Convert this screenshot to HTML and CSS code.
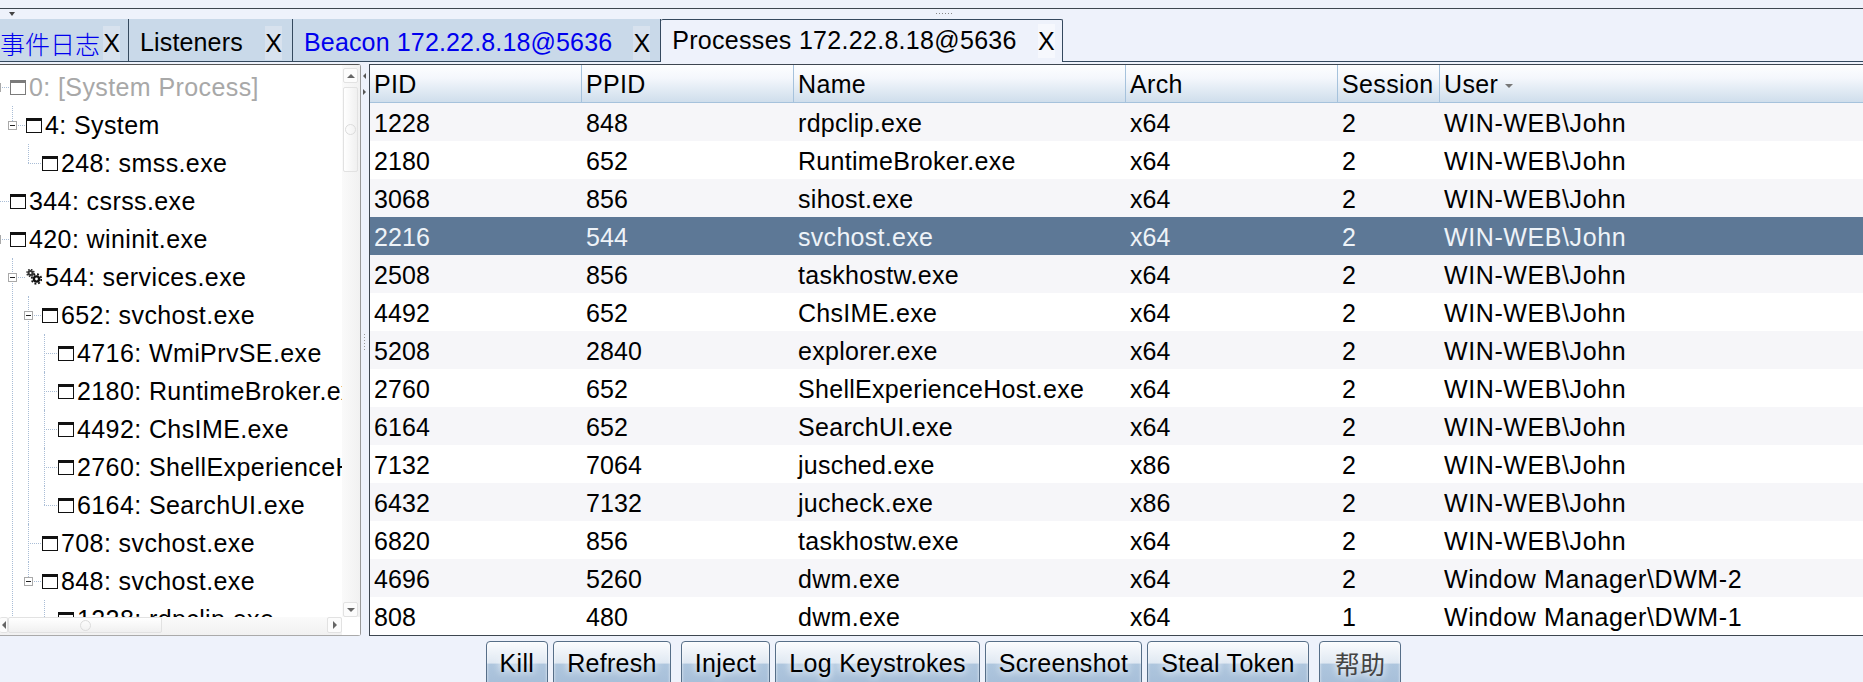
FILE: index.html
```html
<!DOCTYPE html>
<html lang="en">
<head>
  <meta charset="UTF-8">
  <meta name="viewport" content="width=device-width, initial-scale=1">
  <title>Processes 172.22.8.18@5636</title>
  <link rel="stylesheet" href="styles.css">
</head>
<body>

<div class="top-split">
  <span class="caret-down"></span>
  <span class="grip-h"></span>
</div>

<div class="tabs">
  <div class="tab tab-first"><span class="tab-title blue cjk">事件日志</span><span class="tab-x">X</span></div>
  <div class="tab tab-second"><span class="tab-title">Listeners</span><span class="tab-x">X</span></div>
  <div class="tab"><span class="tab-title blue">Beacon 172.22.8.18@5636</span><span class="tab-x">X</span></div>
  <div class="tab active"><span class="tab-title">Processes 172.22.8.18@5636</span><span class="tab-x">X</span></div>
</div>

<div class="main">
  <div class="tree-pane">
    <div class="tree-view">
      <ul class="tree">
        <li class="dim">
          <div class="node"><span class="toggle"></span><span class="win"></span>0: [System Process]</div>
          <ul>
            <li>
              <div class="node"><span class="toggle"></span><span class="win"></span>4: System</div>
              <ul>
                <li><div class="node"><span class="slot"></span><span class="win"></span>248: smss.exe</div></li>
              </ul>
            </li>
          </ul>
        </li>
        <li><div class="node"><span class="slot"></span><span class="win"></span>344: csrss.exe</div></li>
        <li>
          <div class="node"><span class="toggle"></span><span class="win"></span>420: wininit.exe</div>
          <ul>
            <li class="cont">
              <div class="node">
                <span class="toggle"></span>
                <svg class="gear" width="16" height="16" viewBox="0 0 16 16">
                  <circle cx="4.5" cy="4" r="2" fill="#fff" stroke="#333" stroke-width="2"/>
                  <circle cx="4.5" cy="4" r="3.5" fill="none" stroke="#333" stroke-width="1.6" stroke-dasharray="1.5 1.25"/>
                  <circle cx="10.5" cy="10" r="2.6" fill="#fff" stroke="#111" stroke-width="2.4"/>
                  <circle cx="10.5" cy="10" r="4.8" fill="none" stroke="#111" stroke-width="1.8" stroke-dasharray="1.9 1.87"/>
                </svg>
                544: services.exe
              </div>
              <ul>
                <li>
                  <div class="node"><span class="toggle"></span><span class="win"></span>652: svchost.exe</div>
                  <ul>
                    <li><div class="node"><span class="slot"></span><span class="win"></span>4716: WmiPrvSE.exe</div></li>
                    <li><div class="node"><span class="slot"></span><span class="win"></span>2180: RuntimeBroker.exe</div></li>
                    <li><div class="node"><span class="slot"></span><span class="win"></span>4492: ChsIME.exe</div></li>
                    <li><div class="node"><span class="slot"></span><span class="win"></span>2760: ShellExperienceHost.exe</div></li>
                    <li><div class="node"><span class="slot"></span><span class="win"></span>6164: SearchUI.exe</div></li>
                  </ul>
                </li>
                <li><div class="node"><span class="slot"></span><span class="win"></span>708: svchost.exe</div></li>
                <li>
                  <div class="node"><span class="toggle"></span><span class="win"></span>848: svchost.exe</div>
                  <ul>
                    <li><div class="node"><span class="slot"></span><span class="win"></span>1228: rdpclip.exe</div></li>
                  </ul>
                </li>
              </ul>
            </li>
          </ul>
        </li>
      </ul>
    </div>

    <div class="vscroll">
      <div class="sb-btn"><span class="arrow-up"></span></div>
      <div class="vthumb"><span class="wheel"></span></div>
      <div class="sb-fill"></div>
      <div class="sb-btn"><span class="arrow-down"></span></div>
    </div>
    <div class="hscroll">
      <div class="sb-btn left-btn"><span class="arrow-left"></span></div>
      <div class="hthumb"><span class="wheel"></span></div>
      <div class="sb-fill"></div>
      <div class="sb-btn right-btn"><span class="arrow-right"></span></div>
    </div>
    <div class="corner"></div>
  </div>

  <div class="splitter">
    <span class="mini-left"></span>
    <span class="mini-right"></span>
    <span class="grip-v"></span>
  </div>

  <div class="table-pane">
    <table class="procs">
      <colgroup>
        <col class="c-pid"><col class="c-ppid"><col class="c-name"><col class="c-arch"><col class="c-session"><col>
      </colgroup>
      <thead>
        <tr><th>PID</th><th>PPID</th><th>Name</th><th>Arch</th><th>Session</th><th>User<span class="sort"></span></th></tr>
      </thead>
      <tbody>
        <tr><td>1228</td><td>848</td><td>rdpclip.exe</td><td>x64</td><td>2</td><td>WIN-WEB\John</td></tr>
        <tr><td>2180</td><td>652</td><td>RuntimeBroker.exe</td><td>x64</td><td>2</td><td>WIN-WEB\John</td></tr>
        <tr><td>3068</td><td>856</td><td>sihost.exe</td><td>x64</td><td>2</td><td>WIN-WEB\John</td></tr>
        <tr class="selected"><td>2216</td><td>544</td><td>svchost.exe</td><td>x64</td><td>2</td><td>WIN-WEB\John</td></tr>
        <tr><td>2508</td><td>856</td><td>taskhostw.exe</td><td>x64</td><td>2</td><td>WIN-WEB\John</td></tr>
        <tr><td>4492</td><td>652</td><td>ChsIME.exe</td><td>x64</td><td>2</td><td>WIN-WEB\John</td></tr>
        <tr><td>5208</td><td>2840</td><td>explorer.exe</td><td>x64</td><td>2</td><td>WIN-WEB\John</td></tr>
        <tr><td>2760</td><td>652</td><td>ShellExperienceHost.exe</td><td>x64</td><td>2</td><td>WIN-WEB\John</td></tr>
        <tr><td>6164</td><td>652</td><td>SearchUI.exe</td><td>x64</td><td>2</td><td>WIN-WEB\John</td></tr>
        <tr><td>7132</td><td>7064</td><td>jusched.exe</td><td>x86</td><td>2</td><td>WIN-WEB\John</td></tr>
        <tr><td>6432</td><td>7132</td><td>jucheck.exe</td><td>x86</td><td>2</td><td>WIN-WEB\John</td></tr>
        <tr><td>6820</td><td>856</td><td>taskhostw.exe</td><td>x64</td><td>2</td><td>WIN-WEB\John</td></tr>
        <tr><td>4696</td><td>5260</td><td>dwm.exe</td><td>x64</td><td>2</td><td>Window Manager\DWM-2</td></tr>
        <tr><td>808</td><td>480</td><td>dwm.exe</td><td>x64</td><td>1</td><td>Window Manager\DWM-1</td></tr>
      </tbody>
    </table>
  </div>
</div>

<div class="buttons">
  <button type="button">Kill</button>
  <button type="button">Refresh</button>
  <button type="button" class="wide-gap">Inject</button>
  <button type="button">Log Keystrokes</button>
  <button type="button">Screenshot</button>
  <button type="button">Steal Token</button>
  <button type="button" class="wide-gap help cjk">帮助</button>
</div>

</body>
</html>
```

FILE: styles.css
```css
* {
  box-sizing: border-box;
}

html, body {
  height: 682px;
}

body {
  margin: 0;
  overflow: hidden;
  background-color: #eef2fb;
  color: #000;
  font-family: "Liberation Sans", Arial, sans-serif;
  font-size: 25px;
  display: flex;
  flex-direction: column;
}

.cjk {
  font-family: "Noto Sans CJK SC", sans-serif;
  font-weight: 300;
}

.blue {
  color: #0000ee;
}

/* top split bar */
.top-split {
  position: relative;
  height: 19px;
  flex: none;
}

.top-split::before {
  content: "";
  display: block;
  height: 1px;
  margin-top: 8px;
  background-color: #3d4650;
}

.caret-down {
  position: absolute;
  left: 9px;
  top: 12px;
  border: 3px solid transparent;
  border-top: 4px solid #444;
  border-bottom: 0;
}

.grip-h {
  position: absolute;
  left: 935px;
  top: 12px;
  width: 18px;
  height: 3px;
  background-image: radial-gradient(#888 40%, transparent 45%);
  background-size: 3px 3px;
}

/* tabs */
.tabs {
  flex: none;
  height: 43px;
  display: flex;
  align-items: stretch;
  border-bottom: 1px solid #34495e;
}

.tab {
  height: 43px;
  display: flex;
  align-items: center;
  padding: 5px 10px 0 11px;
  background-color: #c9d9e9;
  border-right: 1px solid #34495e;
  border-bottom: 1px solid #34495e;
  white-space: nowrap;
}

.tab-first {
  width: 129px;
  padding-left: 0;
}

.tab-second {
  width: 164px;
}

.tab-title {
  flex: 1;
  margin-right: 21px;
  letter-spacing: 0.15px;
}

.tab-first .tab-title {
  margin-right: 3px;
  letter-spacing: 0;
}

.tab-x {
  flex: none;
  width: 17px;
  height: 34px;
  line-height: 34px;
  text-align: center;
  background-color: #d8e2ee;
}

.tab.active {
  background-color: #eef2fb;
  width: 402px;
  padding: 0 14px 1px 11px;
  border: 1px solid #34495e;
  border-bottom: 0;
  border-left: 0;
  border-radius: 2px 2px 0 0;
}

.active .tab-title {
  letter-spacing: 0.3px;
}

.active .tab-x {
  background-color: #f6f8fd;
}

/* main area */
.main {
  flex: none;
  height: 572px;
  margin-top: 2px;
  display: flex;
}

.tree-pane {
  flex: none;
  width: 361px;
  height: 572px;
  background-color: #fff;
  border-top: 1px solid #555;
  border-right: 1px solid #999;
  border-bottom: 1px solid #aaa;
  border-radius: 0 3px 3px 0;
  display: grid;
  grid-template-columns: 1fr 18px;
  grid-template-rows: 1fr 18px;
}

.tree-view {
  overflow: hidden;
  min-width: 0;
  min-height: 0;
  padding-top: 3px;
  letter-spacing: 0.4px;
}

.tree, .tree ul {
  list-style: none;
  margin: 0;
  padding: 0 0 0 16px;
}

.tree {
  padding: 0;
  margin-left: -8px;
  width: 600px;
}

.tree li {
  position: relative;
}

.tree ul li::before {
  content: "";
  position: absolute;
  left: 4px;
  top: 0;
  bottom: 0;
  border-left: 1px dotted #a9bdd6;
}

.tree ul li:last-child:not(.cont)::before {
  bottom: auto;
  height: 19px;
}

.tree li::after {
  content: "";
  position: absolute;
  left: 4px;
  top: 19px;
  width: 13px;
  border-top: 1px dotted #a9bdd6;
}

.node {
  height: 38px;
  display: flex;
  align-items: center;
  white-space: nowrap;
}

.dim > .node {
  color: #a8a8a8;
}

.slot, .toggle {
  flex: none;
  width: 9px;
  margin-right: 9px;
}

.toggle {
  height: 9px;
  position: relative;
  z-index: 1;
  background-color: #fff;
  border: 1px solid #a9a9a9;
}

.toggle::before {
  content: "";
  display: block;
  width: 5px;
  height: 1px;
  margin: 3px 1px;
  background-color: #222;
}

.win {
  flex: none;
  position: relative;
  z-index: 1;
  width: 16px;
  height: 15px;
  margin-right: 3px;
  background-color: #fff;
  border: 1px solid #111;
  border-top-width: 3px;
}

.dim > .node .win {
  border-color: #7b7b7b;
}

.gear {
  flex: none;
  position: relative;
  z-index: 1;
  margin-right: 3px;
  background-color: #fff;
}

/* scrollbars */
.vscroll, .hscroll {
  display: flex;
  background-color: #f7f7f7;
}

.vscroll {
  flex-direction: column;
  padding: 3px 2px 0 1px;
  background-image: linear-gradient(to right, #fafafa, #f1f1f1);
}

.hscroll {
  padding-bottom: 2px;
  background-image: linear-gradient(#fafafa, #f1f1f1);
}

.sb-btn {
  flex: none;
  display: flex;
  align-items: center;
  justify-content: center;
  height: 15px;
  background-color: #fcfcfc;
  border: 1px solid #e2e2e2;
  border-radius: 2px;
}

.left-btn {
  width: 8px;
  height: 16px;
  border-left: 0;
}

.right-btn {
  width: 15px;
  height: 16px;
}

.vthumb, .hthumb {
  flex: none;
  display: flex;
  align-items: center;
  justify-content: center;
  border: 1px solid #e2e2e2;
  border-radius: 2px;
  background-color: #f6f6f6;
}

.vthumb {
  height: 85px;
  margin-top: 4px;
  background-image: linear-gradient(to right, #fff, #f0f0f0);
}

.hthumb {
  width: 154px;
  background-image: linear-gradient(#fff, #f0f0f0);
}

.wheel {
  width: 11px;
  height: 11px;
  border: 1px solid #dcdcdc;
  border-radius: 50%;
}

.sb-fill {
  flex: 1;
}

.arrow-up, .arrow-down, .arrow-left, .arrow-right {
  width: 0;
  height: 0;
  border: 4px solid transparent;
}

.arrow-up {
  border-top: 0;
  border-bottom-color: #666;
}

.arrow-down {
  border-bottom: 0;
  border-top-color: #666;
}

.arrow-left {
  border-left: 0;
  border-right-color: #666;
}

.arrow-right {
  border-right: 0;
  border-left-color: #666;
}

.corner {
  background-color: #fff;
}

/* splitter between tree and table */
.splitter {
  flex: none;
  width: 8px;
  position: relative;
}

.mini-left, .mini-right {
  position: absolute;
  left: 2px;
  border: 3px solid transparent;
}

.mini-left {
  top: 9px;
  border-left: 0;
  border-right: 3px solid #555;
}

.mini-right {
  top: 25px;
  border-right: 0;
  border-left: 3px solid #555;
}

.grip-v {
  position: absolute;
  left: 2px;
  top: 269px;
  width: 3px;
  height: 18px;
  background-image: radial-gradient(#999 40%, transparent 45%);
  background-size: 3px 3px;
}

/* process table */
.table-pane {
  flex: 1;
  min-width: 0;
  height: 572px;
  background-color: #fff;
  border-top: 1px solid #3d4650;
  border-left: 1px solid #3d4650;
  border-bottom: 1px solid #3d4650;
}

.procs {
  width: 100%;
  table-layout: fixed;
  border-collapse: separate;
  border-spacing: 0;
}

.c-pid { width: 212px; }
.c-ppid { width: 212px; }
.c-name { width: 332px; }
.c-arch { width: 212px; }
.c-session { width: 102px; }

.procs th {
  height: 38px;
  padding: 2px 0 0 4px;
  text-align: left;
  font-weight: normal;
  letter-spacing: 0.35px;
  white-space: nowrap;
  background-image: linear-gradient(#fdfeff, #f4f7fc 35%, #cfdeec);
  border-right: 1px solid #a6c2dc;
  border-bottom: 1px solid #a6c2dc;
}

.procs th:last-child {
  border-right: 0;
}

.procs td {
  height: 38px;
  padding: 2px 0 0 4px;
  letter-spacing: 0.1px;
  white-space: nowrap;
  overflow: hidden;
}

.procs td:nth-child(3) {
  letter-spacing: 0.3px;
}

.procs td:nth-child(6) {
  letter-spacing: 0.6px;
}

.procs tbody tr:nth-child(odd) {
  background-color: #f6f6f9;
}

.procs tbody tr:nth-child(even) {
  background-color: #fff;
}

.procs tbody tr.selected {
  background-color: #5d7896;
  color: #eef3f8;
}

.sort {
  display: inline-block;
  margin-left: 7px;
  vertical-align: middle;
  border: 4px solid transparent;
  border-top: 4px solid #777;
  border-bottom: 0;
}

/* bottom buttons */
.buttons {
  flex: none;
  display: flex;
  justify-content: center;
  gap: 5px;
  padding: 5px 0 0 24px;
  height: 46px;
  overflow: hidden;
}

button {
  flex: none;
  height: 46px;
  padding: 0 13px 2px;
  color: #000;
  font-family: "Liberation Sans", Arial, sans-serif;
  font-size: 25px;
  letter-spacing: 0.3px;
  border: 1px solid #566e88;
  border-radius: 4px;
  background-image: linear-gradient(#fbfcfe, #dfe8f2 48%, #aec6de 50%, #a6bed8);
  box-shadow: inset 0 0 3px rgba(255, 255, 255, 0.8);
  text-shadow: 0 0 6px #eef3f9, 0 0 10px #eef3f9;
}

.wide-gap {
  margin-left: 5px;
}

button.help {
  padding: 0 15px 2px;
  color: #444;
  font-family: "Noto Sans CJK SC", sans-serif;
  font-weight: 400;
}
```
